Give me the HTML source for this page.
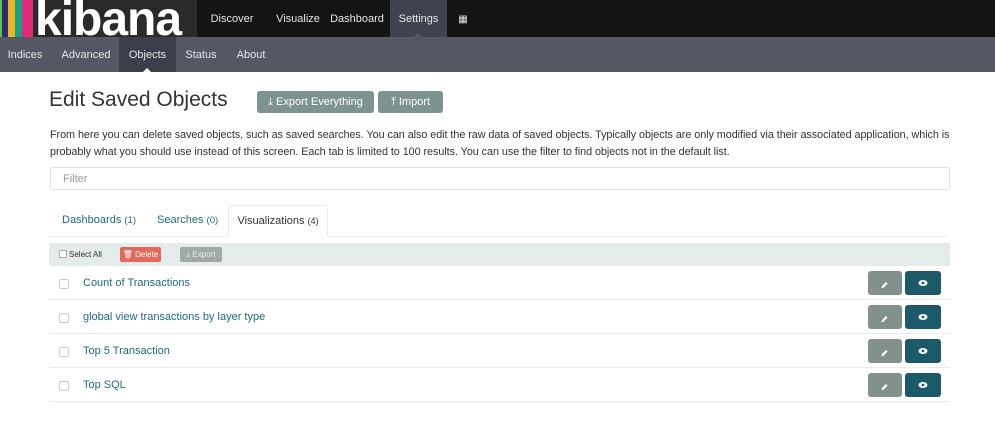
<!DOCTYPE html>
<html><head><meta charset="utf-8"><style>
*{box-sizing:border-box;margin:0;padding:0}
body{width:995px;height:440px;background:#fff;font-family:"Liberation Sans",Arial,sans-serif;position:relative;overflow:hidden;color:#333}
.abs{position:absolute}
.top{left:0;top:0;width:995px;height:37px;background:#141414}
.logo{left:0;top:0;width:197px;height:37px;background:#2a2a2a;overflow:hidden}
.nav{top:0;height:37px;line-height:39px;color:#e6e6e6;font-size:11px;text-align:center}
.sub{left:0;top:37px;width:995px;height:35px;background:#545865}
.s{top:37px;height:35px;line-height:37px;color:#e6e6e6;font-size:11px;text-align:center}
.btn{background:#7d938f;color:#fff;font-size:11px;border-radius:3px;text-align:center;line-height:22px;height:22px}
.row{left:49px;width:901px;height:34px;border-bottom:1px solid #e8ecec}
.cb{position:absolute;left:10px;top:13px;width:10px;height:10px;border:1px solid #ccc;border-radius:2px;background:#fff}
.lnk{position:absolute;left:34px;top:11px;font-size:11px;color:#1f6b7a}
.ed{position:absolute;left:819px;top:5px;width:34px;height:24px;background:#80918e;border-radius:3px}
.vw{position:absolute;left:856px;top:5px;width:36px;height:24px;background:#1c5a6a;border-radius:3px}
</style></head><body>
<div class="abs top"></div>
<div class="abs logo">
<div class="abs" style="left:0;top:0;width:2px;height:37px;background:#6bbf3f"></div>
<div class="abs" style="left:2px;top:0;width:6px;height:37px;background:#24307a"></div>
<div class="abs" style="left:8px;top:0;width:7px;height:37px;background:#f0b51b"></div>
<div class="abs" style="left:15px;top:0;width:7px;height:37px;background:#18a08e"></div>
<div class="abs" style="left:22px;top:0;width:11px;height:37px;background:#e4287a"></div>
<div class="abs" style="left:35px;top:-4px;color:#fff;font-weight:bold;font-size:48px;letter-spacing:-1px;line-height:48px">kibana</div>
</div>
<div class="abs nav" style="left:197px;width:70px">Discover</div>
<div class="abs nav" style="left:267px;width:62px">Visualize</div>
<div class="abs nav" style="left:325px;width:64px;">Dashboard</div>
<div class="abs nav" style="left:390px;width:57px;background:#3f4350">Settings</div>
<div class="abs" style="left:414px;top:33px;border:4px solid transparent;border-bottom-color:#545865;border-top:0"></div>
<div class="abs nav" style="left:449px;width:28px;font-size:10px">&#9638;</div>
<div class="abs sub"></div>
<div class="abs s" style="left:0;width:50px">Indices</div>
<div class="abs s" style="left:54px;width:64px">Advanced</div>
<div class="abs s" style="left:119px;width:57px;background:#3b3e4a">Objects</div>
<div class="abs s" style="left:176px;width:50px">Status</div>
<div class="abs s" style="left:228px;width:46px">About</div>
<div class="abs" style="left:143px;top:68px;border:4px solid transparent;border-bottom-color:#fff;border-top:0"></div>
<div class="abs" style="left:49px;top:88px;font-size:21px;color:#333">Edit Saved Objects</div>
<div class="abs btn" style="left:257px;top:91px;width:117px">&#10515; Export Everything</div>
<div class="abs btn" style="left:378px;top:91px;width:65px">&#10514; Import</div>
<div class="abs" style="left:50px;top:127px;width:905px;font-size:10.8px;line-height:17px;color:#333;letter-spacing:-0.05px">From here you can delete saved objects, such as saved searches. You can also edit the raw data of saved objects. Typically objects are only modified via their associated application, which is probably what you should use instead of this screen. Each tab is limited to 100 results. You can use the filter to find objects not in the default list.</div>
<div class="abs" style="left:50px;top:167px;width:900px;height:23px;border:1px solid #dde3e3;border-radius:3px;font-size:11px;color:#999;padding:5px 12px">Filter</div>
<div class="abs" style="left:49px;top:236px;width:901px;border-top:1px solid #eef1f1"></div>
<div class="abs" style="left:62px;top:214px;font-size:11px;color:#1f6b7a">Dashboards <span style="font-size:9.5px">(1)</span></div>
<div class="abs" style="left:157px;top:214px;font-size:11px;color:#1f6b7a">Searches <span style="font-size:9.5px">(0)</span></div>
<div class="abs" style="left:228px;top:205px;width:100px;height:32px;background:#fff;border:1px solid #e8ecec;border-bottom:none;border-radius:3px 3px 0 0;font-size:11px;color:#333;text-align:center;line-height:30px">Visualizations <span style="font-size:9px">(4)</span></div>
<div class="abs" style="left:49px;top:243px;width:901px;height:23px;background:#e4ebeb"></div>
<div class="abs" style="left:59px;top:250px;width:8px;height:8px;border:1px solid #aaa;background:#fff;border-radius:1px"></div>
<div class="abs" style="left:69px;top:250px;font-size:8px;color:#333">Select All</div>
<div class="abs" style="left:120px;top:247px;width:41px;height:15px;background:#e2685a;border-radius:2px;color:#fff;font-size:8px;text-align:center;line-height:15px">&#128465; Delete</div>
<div class="abs" style="left:180px;top:247px;width:42px;height:15px;background:#a0aaa8;border-radius:2px;color:#e8eded;font-size:8px;text-align:center;line-height:15px">&#10515; Export</div>
<div class="abs row" style="top:266px"><div class="cb"></div><div class="lnk">Count of Transactions</div><div class="ed"></div><div class="vw"></div></div>
<div class="abs row" style="top:300px"><div class="cb"></div><div class="lnk">global view transactions by layer type</div><div class="ed"></div><div class="vw"></div></div>
<div class="abs row" style="top:334px"><div class="cb"></div><div class="lnk">Top 5 Transaction</div><div class="ed"></div><div class="vw"></div></div>
<div class="abs row" style="top:368px"><div class="cb"></div><div class="lnk">Top SQL</div><div class="ed"></div><div class="vw"></div></div>
<svg class="abs" style="left:0;top:0" width="995" height="440">
<g fill="#fff">
<g id="e"><path d="M882 286 l4-4 1.6 1.6 -4 4 -2.2 0.6z"/><ellipse cx="923" cy="283" rx="4.5" ry="3"/><circle cx="923" cy="283" r="1.4" fill="#1c5a6a"/></g>
<use href="#e" y="34"/><use href="#e" y="68"/><use href="#e" y="102"/>
</g></svg>
</body></html>
